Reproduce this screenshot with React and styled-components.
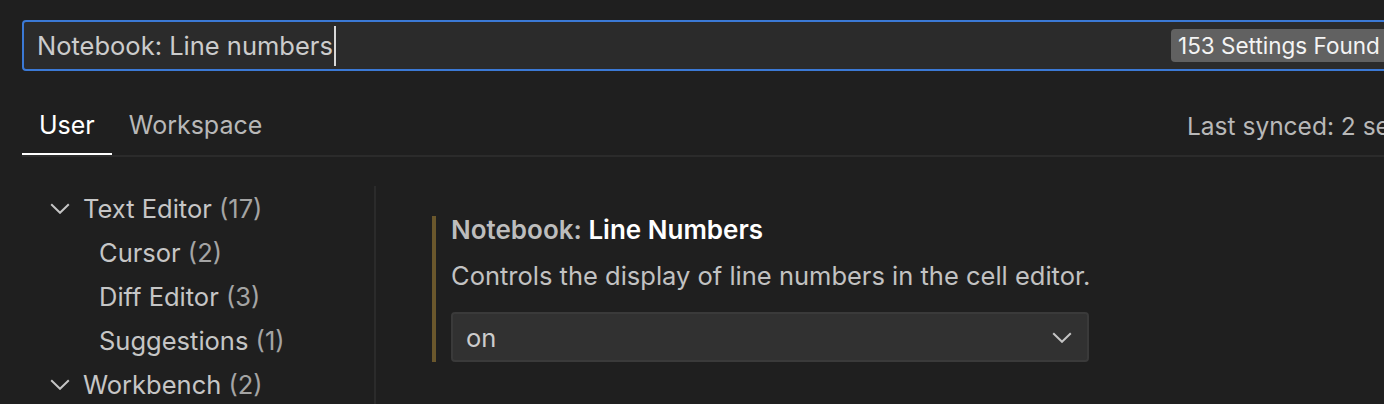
import React from 'react'
import styled, { createGlobalStyle } from 'styled-components'

const Global = createGlobalStyle`
    html, body {
        margin: 0;
        padding: 0;
        background: #1f1f1f;
    }
    * {
        box-sizing: border-box;
    }
`
const Page = styled.div`
    width: 1384px;
    height: 404px;
    overflow: hidden;
    background: #1f1f1f;
    padding: 20px 0 0 22px;
    font-family: 'Inter', 'Liberation Sans', sans-serif;
    color: #cccccc;
`
const SearchBox = styled.div`
    width: 1420px;
    height: 51px;
    display: flex;
    align-items: center;
    border: 2px solid #3b79d5;
    border-radius: 4px;
    background: #2b2b2b;
`
const SearchText = styled.div`
    flex: none;
    width: 1147px;
    padding-left: 13px;
    font-size: 25.5px;
    color: #cccccc;
    display: flex;
    align-items: center;
    white-space: pre;
`
const Caret = styled.span`
    display: inline-block;
    width: 2px;
    height: 40px;
    margin-left: 1px;
    background: #d8d8d8;
`
const Badge = styled.div`
    flex: none;
    height: 33px;
    display: flex;
    align-items: center;
    padding: 0 7px;
    border-radius: 4px;
    background: #616161;
    color: #f4f4f4;
    font-size: 22.5px;
    white-space: nowrap;
`
const TabRow = styled.div`
    display: flex;
    align-items: center;
    margin-top: 29px;
    width: 1420px;
    height: 57px;
    border-bottom: 2px solid #2b2b2b;
`
const TabList = styled.div`
    display: flex;
    flex: none;
    width: 1165px;
    height: 100%;
`
const Tab = styled.div`
    height: 100%;
    padding: 0 17px 4px;
    display: flex;
    align-items: center;
    font-size: 25px;
    color: ${p => (p.$active ? '#ffffff' : '#b8b8b8')};
    border-bottom: 2px solid ${p => (p.$active ? '#ffffff' : 'transparent')};
    margin-bottom: -2px;
`
const Synced = styled.div`
    font-size: 24.5px;
    color: #b8b8b8;
    white-space: nowrap;
    padding-bottom: 4px;
`
const Body = styled.div`
    display: flex;
    padding-top: 29px;
`
const Sidebar = styled.div`
    flex: none;
    width: 354px;
    height: 220px;
    border-right: 2px solid #2b2b2b;
`
const TreeRow = styled.div`
    height: 44px;
    display: flex;
    align-items: center;
    padding-left: ${p => (p.$child ? '77px' : '28px')};
    font-size: 25.5px;
    color: #c6c6c6;
    white-space: pre;
`
const Chevron = styled.svg`
    width: 20px;
    height: 11px;
    margin-right: ${p => p.$gap || 0}px;
    flex: none;
`
const Count = styled.span`
    color: #a4a4a4;
`
const Content = styled.div`
    padding: 30px 0 0 56px;
`
const Setting = styled.div`
    border-left: 4px solid #6a572c;
    padding-left: 15px;
    width: 658px;
`
const Title = styled.div`
    font-size: 26px;
    font-weight: 600;
    color: #ffffff;
    line-height: 28px;
    white-space: pre;
`
const Category = styled.span`
    color: #bdbdbd;
`
const Description = styled.div`
    font-size: 25.5px;
    color: #c2c2c2;
    line-height: 28px;
    margin-top: 18px;
    white-space: nowrap;
`
const Select = styled.div`
    margin-top: 22px;
    width: 638px;
    height: 50px;
    display: flex;
    align-items: center;
    justify-content: space-between;
    padding: 0 15px 0 13px;
    background: #313131;
    border: 2px solid #3a3a3a;
    border-radius: 4px;
    font-size: 25.5px;
    color: #cccccc;
`

function ChevronDown({ gap }) {
    return (
        <Chevron viewBox="0 0 20 11" $gap={gap}>
            <path d="M1.2 1.2 L10 9.8 L18.8 1.2" fill="none" stroke="#c4c4c4" strokeWidth="2" />
        </Chevron>
    )
}

const tree = [
    { label: 'Text Editor', count: 17 },
    { label: 'Cursor', count: 2, child: true },
    { label: 'Diff Editor', count: 3, child: true },
    { label: 'Suggestions', count: 1, child: true },
    { label: 'Workbench', count: 2 },
]

export default function App() {
    return (
        <Page>
            <Global />
            <SearchBox>
                <SearchText>
                    Notebook: Line numbers<Caret />
                </SearchText>
                <Badge>153 Settings Found</Badge>
            </SearchBox>
            <TabRow>
                <TabList>
                    <Tab $active>User</Tab>
                    <Tab>Workspace</Tab>
                </TabList>
                <Synced>Last synced: 2 seconds ago</Synced>
            </TabRow>
            <Body>
                <Sidebar>
                    {tree.map(item => (
                        <TreeRow key={item.label} $child={item.child}>
                            {!item.child && <ChevronDown gap={13} />}
                            {item.label + ' '}
                            <Count>({item.count})</Count>
                        </TreeRow>
                    ))}
                </Sidebar>
                <Content>
                    <Setting>
                        <Title>
                            <Category>Notebook: </Category>Line Numbers
                        </Title>
                        <Description>Controls the display of line numbers in the cell editor.</Description>
                        <Select>
                            on
                            <ChevronDown />
                        </Select>
                    </Setting>
                </Content>
            </Body>
        </Page>
    )
}
